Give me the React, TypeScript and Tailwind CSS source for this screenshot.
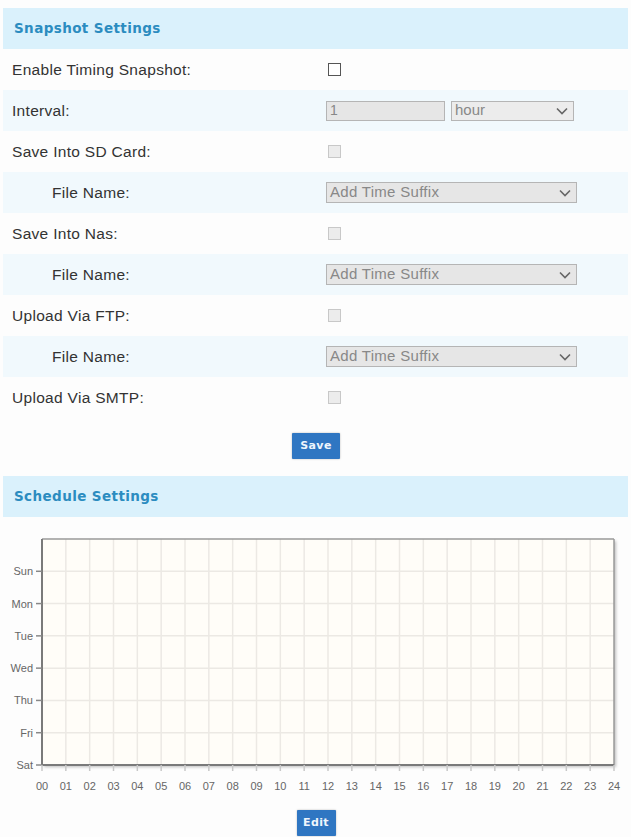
import { clsx as cn } from 'clsx'

// Snapshot settings + weekly schedule grid

type Row =
  | { label: string; indent?: boolean; kind: 'check'; disabled?: boolean }
  | { label: string; indent?: boolean; kind: 'interval' }
  | { label: string; indent?: boolean; kind: 'select'; value: string }

const rows: Row[] = [
  { label: 'Enable Timing Snapshot:', kind: 'check' },
  { label: 'Interval:', kind: 'interval' },
  { label: 'Save Into SD Card:', kind: 'check', disabled: true },
  { label: 'File Name:', indent: true, kind: 'select', value: 'Add Time Suffix' },
  { label: 'Save Into Nas:', kind: 'check', disabled: true },
  { label: 'File Name:', indent: true, kind: 'select', value: 'Add Time Suffix' },
  { label: 'Upload Via FTP:', kind: 'check', disabled: true },
  { label: 'File Name:', indent: true, kind: 'select', value: 'Add Time Suffix' },
  { label: 'Upload Via SMTP:', kind: 'check', disabled: true },
]

const days = ['Sun', 'Mon', 'Tue', 'Wed', 'Thu', 'Fri', 'Sat']

function Chevron() {
  return (
    <svg width="14" height="10" viewBox="0 0 14 10" className="shrink-0">
      <path d="M2 2.5 L7 7.5 L12 2.5" fill="none" stroke="#666" strokeWidth="1.6" />
    </svg>
  )
}

function SectionHeader({ title }: { title: string }) {
  return (
    <div className="mx-[3px] h-[41px] bg-[#daf1fc] flex items-center pl-[11px]">
      <span className="font-['DejaVu_Sans',sans-serif] font-bold text-[13.5px] tracking-[0.4px] text-[#2b8cc0]">{title}</span>
    </div>
  )
}

function BlueButton({ label, w }: { label: string; w: string }) {
  return (
    <button className={cn("h-[26px] bg-[#2f76c2] text-[#eef5fc] font-['DejaVu_Sans',sans-serif] font-bold text-[11px] tracking-[0.4px] rounded-[1px] shadow-[0_0_2px_rgba(0,0,0,0.3)]", w)}>
      {label}
    </button>
  )
}

function Control({ row }: { row: Row }) {
  if (row.kind === 'check') {
    return (
      <span
        className={cn(
          'ml-[2px] w-[13px] h-[13px] border',
          row.disabled ? 'border-[#c8c8c8] bg-[#ececec]' : 'border-[#555] bg-white'
        )}
      />
    )
  }
  if (row.kind === 'interval') {
    return (
      <div className="flex gap-[6px]">
        <div className="w-[119px] h-[20px] bg-[#e6e6e6] border border-[#b5b5b5] flex items-center pl-[3px] text-[14px] text-[#888]">1</div>
        <div className="w-[123px] h-[20px] bg-[#ececec] border border-[#b5b5b5] flex items-center justify-between pl-[3px] pr-[4px] text-[15px] text-[#888]">
          hour <Chevron />
        </div>
      </div>
    )
  }
  return (
    <div className="w-[251px] h-[21px] bg-[#e6e6e6] border border-[#b5b5b5] flex items-center justify-between pl-[3px] pr-[4px] text-[15px] tracking-[0.3px] text-[#888]">
      {row.value} <Chevron />
    </div>
  )
}

function ScheduleChart() {
  const left = 42
  const right = 614
  const top = 22
  const bottom = 248
  const colW = (right - left) / 24
  const rowH = (bottom - top) / 7
  return (
    <svg width="631" height="290" viewBox="0 0 631 290" className="block">
      <defs>
        <filter id="sh" x="-5%" y="-5%" width="110%" height="110%">
          <feDropShadow dx="2" dy="2" stdDeviation="1.5" floodColor="#000" floodOpacity="0.25" />
        </filter>
      </defs>
      <rect x={left} y={top} width={right - left} height={bottom - top} fill="#fffdf8" filter="url(#sh)" />
      {Array.from({ length: 23 }, (_, i) => (
        <line key={'v' + i} x1={left + colW * (i + 1)} y1={top} x2={left + colW * (i + 1)} y2={bottom} stroke="#ece9e4" strokeWidth="1.5" />
      ))}
      {Array.from({ length: 6 }, (_, i) => (
        <line key={'h' + i} x1={left} y1={top + rowH * (i + 1)} x2={right} y2={top + rowH * (i + 1)} stroke="#ece9e4" strokeWidth="1.5" />
      ))}
      <line x1={left} y1={top} x2={right} y2={top} stroke="#9a9a9a" strokeWidth="1.5" />
      <line x1={right} y1={top} x2={right} y2={bottom} stroke="#9a9a9a" strokeWidth="1.5" />
      <line x1={left} y1={top} x2={left} y2={bottom} stroke="#7a7a7a" strokeWidth="2" />
      <line x1={left} y1={bottom} x2={right} y2={bottom} stroke="#7a7a7a" strokeWidth="2" />
      {days.map((d, i) => {
        const y = top + rowH * (i + 1)
        return (
          <g key={d}>
            <line x1={left - 6} y1={y} x2={left} y2={y} stroke="#888" strokeWidth="1.5" />
            <text x={left - 9} y={y + 4} textAnchor="end" fontSize="11" fill="#666" fontFamily="Liberation Sans, sans-serif">{d}</text>
          </g>
        )
      })}
      {Array.from({ length: 25 }, (_, i) => {
        const x = left + colW * i
        return (
          <g key={'x' + i}>
            <line x1={x} y1={bottom} x2={x} y2={bottom + 6} stroke="#c8c8c8" strokeWidth="1.5" />
            <text x={x} y={bottom + 25} textAnchor="middle" fontSize="11" fill="#666" fontFamily="Liberation Sans, sans-serif">{String(i).padStart(2, '0')}</text>
          </g>
        )
      })}
    </svg>
  )
}

export default function App() {
  return (
    <div className="w-[631px] min-h-[837px] bg-[#fdfdfd] pt-[8px] font-['Liberation_Sans',Arial,sans-serif] text-[#333]">
      <SectionHeader title="Snapshot Settings" />

      <div className="mx-[3px]">
        {rows.map((row, i) => (
          <div key={i} className={cn('h-[41px] flex items-center', i % 2 === 1 ? 'bg-[#f1f9fd]' : 'bg-[#fdfdfd]')}>
            <div className={cn('w-[323px] text-[15.5px] tracking-[0.3px] text-[#333]', row.indent ? 'pl-[49px]' : 'pl-[9px]')}>{row.label}</div>
            <Control row={row} />
          </div>
        ))}
      </div>

      <div className="flex justify-center mt-[15px] pl-[1px]">
        <BlueButton label="Save" w="w-[48px]" />
      </div>

      <div className="mt-[17px]">
        <SectionHeader title="Schedule Settings" />
      </div>

      <ScheduleChart />

      <div className="flex justify-center mt-[3px] pl-[1px]">
        <BlueButton label="Edit" w="w-[39px]" />
      </div>
    </div>
  )
}
